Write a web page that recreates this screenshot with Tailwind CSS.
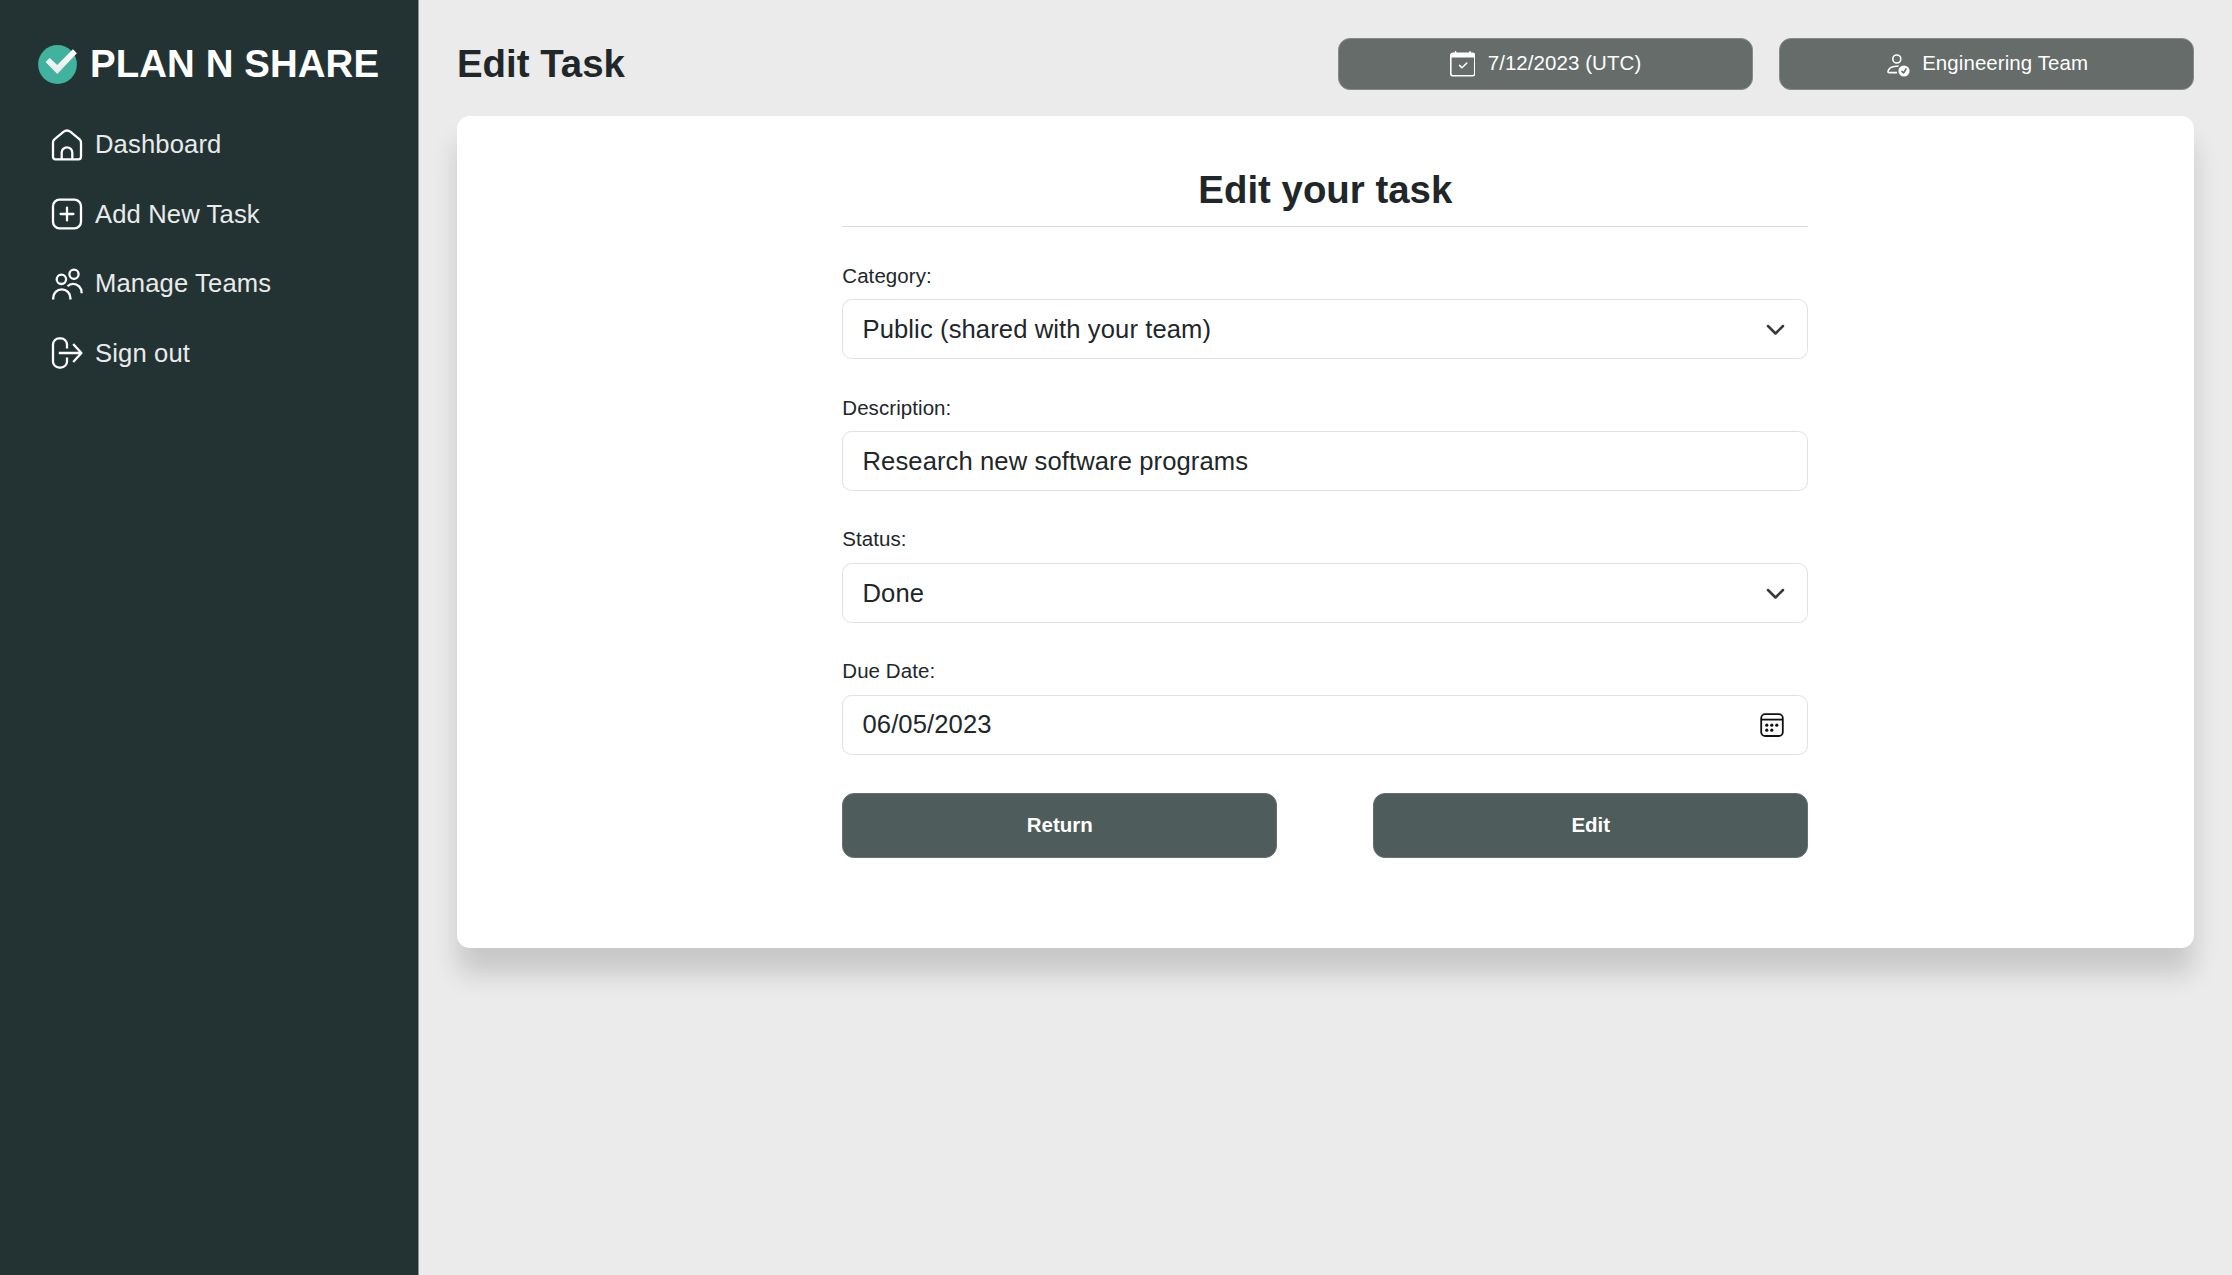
<!DOCTYPE html>
<html lang="en">
<head>
<meta charset="utf-8">
<title>Plan N Share - Edit Task</title>
<script src="https://cdn.jsdelivr.net/npm/@tailwindcss/browser@4"></script>
</head>
<body class="flex h-[1275px] w-[2232px] overflow-hidden bg-[#ebebeb] font-['Liberation_Sans',Arial,sans-serif] text-[#212729]">
  <aside class="flex w-[419px] shrink-0 flex-col border-r border-[#8b9393] bg-[#233333] pl-[38px] pt-[38.4px]">
    <div class="flex h-[51px] items-center gap-[13px] text-white">
      <svg class="mt-px size-[39px] shrink-0" viewBox="0 0 39 39">
        <defs><linearGradient id="tick" x1="0" y1="0" x2="0" y2="1"><stop offset="0" stop-color="#fff"/><stop offset="1" stop-color="#e4eae9"/></linearGradient></defs>
        <circle cx="19.5" cy="19.5" r="19.4" fill="#40b29d"/>
        <path d="M7.6 17l4.2-4.1 7.4 7.2L34.9 4.2l4 4L19.3 29z" fill="url(#tick)"/>
      </svg>
      <span class="whitespace-nowrap text-[38.4px] leading-[51px] font-bold tracking-[0.1px]">PLAN N SHARE</span>
    </div>
    <nav class="mt-[36px] flex flex-col gap-[31px] pl-[13px] text-[25.6px] leading-[38.4px] tracking-[0.14px] text-[#e9ebeb]">
      <a class="flex h-[38.4px] items-center gap-[12px] pt-[3px]">
        <svg class="relative -top-px size-8" viewBox="0 0 32 32" fill="none" stroke="#fff" stroke-width="2.3"><path d="M2 13.5Q2 11.6 3.4 10.3L12.4 2.9Q16 .2 19.6 2.9L28.6 10.3Q30 11.6 30 13.5V27.8Q30 30.3 27.5 30.3H4.5Q2 30.3 2 27.8zM10.7 30V23.6a5.3 5.3 0 0 1 10.6 0V30"/></svg>
        <span class="relative -top-[1.5px]">Dashboard</span>
      </a>
      <a class="flex h-[38.4px] items-center gap-[12px] pt-[3px]">
        <svg class="relative -top-px size-8" viewBox="0 0 32 32" fill="none" stroke="#fff" stroke-width="2.3"><rect x="2" y="1.7" width="28" height="28.6" rx="6.5"/><path d="M16 9.6v12.8M9.6 16h12.8" stroke-linecap="round"/></svg>
        <span class="relative -top-[1.5px]">Add New Task</span>
      </a>
      <a class="flex h-[38.4px] items-center gap-[12px] pt-[3px]">
        <svg class="relative -top-px size-8" viewBox="0 0 32 32" fill="none" stroke="#fff" stroke-width="2.3"><circle cx="10.4" cy="11.3" r="4.7"/><circle cx="23" cy="6.3" r="4.6"/><path d="M2.2 31.5V30a8.6 8.6 0 0 1 17.2 0v1.5M16.6 18.2Q18.8 15.9 22 15.9a8.6 8.6 0 0 1 8.6 8.6v.7"/></svg>
        <span class="relative -top-[1.5px]">Manage Teams</span>
      </a>
      <a class="flex h-[38.4px] items-center gap-[12px] pt-[3px]">
        <svg class="relative -top-px size-8" viewBox="0 0 32 32" fill="none" stroke="#fff" stroke-width="2.3"><path d="M16 11.6V7.6A6.2 6.2 0 0 0 9.8 1.4H8.2A6.2 6.2 0 0 0 2 7.6v16.8a6.2 6.2 0 0 0 6.2 6.2h1.6a6.2 6.2 0 0 0 6.2-6.2v-4M7.8 16H30.4M22.2 7l8.2 9-8.2 9" stroke-linejoin="round"/></svg>
        <span class="relative -top-[1.5px]">Sign out</span>
      </a>
    </nav>
  </aside>

  <main class="flex flex-1 flex-col pl-[38px] pr-[38.4px] pt-[38px]">
    <header class="flex h-[52.4px] items-center justify-between">
      <h1 class="text-[38.4px] leading-[52px] font-bold">Edit Task</h1>
      <div class="flex gap-[25.6px] text-[20.48px] text-white">
        <div class="flex h-[52.4px] w-[415px] items-center justify-center gap-[12.4px] rounded-[12px] border border-[#848b88] bg-[#656c69]">
          <svg class="size-[25.6px]" viewBox="0 0 16 16" fill="currentColor"><path d="M10.854 7.146a.5.5 0 0 1 0 .708l-3 3a.5.5 0 0 1-.708 0l-1.5-1.5a.5.5 0 1 1 .708-.708L7.5 9.793l2.646-2.647a.5.5 0 0 1 .708 0z"/><path d="M3.5 0a.5.5 0 0 1 .5.5V1h8V.5a.5.5 0 0 1 1 0V1h1a2 2 0 0 1 2 2v11a2 2 0 0 1-2 2H2a2 2 0 0 1-2-2V3a2 2 0 0 1 2-2h1V.5a.5.5 0 0 1 .5-.5zM1 4v10a1 1 0 0 0 1 1h12a1 1 0 0 0 1-1V4H1z"/></svg>
          <span class="-mt-px tracking-[0.08px]">7/12/2023 (UTC)</span>
        </div>
        <div class="flex h-[52.4px] w-[415px] items-center justify-center gap-[12.4px] rounded-[12px] border border-[#848b88] bg-[#656c69]">
          <svg class="size-[25.6px]" viewBox="0 0 16 16" fill="currentColor"><path d="M12.5 16a3.5 3.5 0 1 0 0-7 3.5 3.5 0 0 0 0 7Zm1.679-4.493-1.335 2.226a.75.75 0 0 1-1.174.144l-.774-.773a.5.5 0 0 1 .708-.708l.547.548 1.17-1.951a.5.5 0 1 1 .858.514ZM11 5a3 3 0 1 1-6 0 3 3 0 0 1 6 0ZM8 7a2 2 0 1 0 0-4 2 2 0 0 0 0 4Z"/><path d="M8.256 14a4.474 4.474 0 0 1-.229-1.004H3c.001-.246.154-.986.832-1.664C4.484 10.68 5.711 10 8 10c.26 0 .507.009.74.025.226-.341.496-.65.804-.918C9.077 9.038 8.564 9 8 9c-5 0-6 3-6 4s1 1 1 1h5.256Z"/></svg>
          <span class="-mt-px tracking-[0.08px]">Engineering Team</span>
        </div>
      </div>
    </header>

    <section class="mt-[25.6px] flex h-[832px] justify-center rounded-[12.8px] bg-white shadow-[0_25.6px_25.6px_rgba(0,0,0,0.15)]">
      <form class="flex w-[966px] flex-col pt-[51px]">
        <h2 class="h-[60px] border-b border-[#d5dada] text-center text-[38.4px] leading-[46px] font-bold">Edit your task</h2>

        <div class="mt-[34px] flex h-[98.4px] flex-col justify-between">
          <label class="text-[20.48px] leading-[30.7px] tracking-[0.08px]">Category:</label>
          <div class="flex h-[60px] items-center justify-between rounded-[9.6px] border border-[#dee2e4] pl-[19.2px] pr-[22px] text-[25.6px] tracking-[0.1px]">
            <span>Public (shared with your team)</span>
            <svg class="mt-0.5 h-3 w-5" viewBox="0 0 20 12" fill="none" stroke="#343a40" stroke-width="2.5" stroke-linecap="round" stroke-linejoin="round"><path d="M3 2l7.5 7.5L18 2"/></svg>
          </div>
        </div>
        <div class="mt-[33.4px] flex h-[98.4px] flex-col justify-between">
          <label class="text-[20.48px] leading-[30.7px] tracking-[0.08px]">Description:</label>
          <div class="flex h-[60px] items-center rounded-[9.6px] border border-[#dee2e4] pl-[19.2px] text-[25.6px] tracking-[0.1px]">Research new software programs</div>
        </div>
        <div class="mt-[33.4px] flex h-[98.4px] flex-col justify-between">
          <label class="-mt-px text-[20.48px] leading-[30.7px] tracking-[0.08px]">Status:</label>
          <div class="flex h-[60px] items-center justify-between rounded-[9.6px] border border-[#dee2e4] pl-[19.2px] pr-[22px] text-[25.6px] tracking-[0.1px]">
            <span>Done</span>
            <svg class="mt-0.5 h-3 w-5" viewBox="0 0 20 12" fill="none" stroke="#343a40" stroke-width="2.5" stroke-linecap="round" stroke-linejoin="round"><path d="M3 2l7.5 7.5L18 2"/></svg>
          </div>
        </div>
        <div class="mt-[33.4px] flex h-[98.4px] flex-col justify-between">
          <label class="text-[20.48px] leading-[30.7px] tracking-[0.08px]">Due Date:</label>
          <div class="flex h-[60px] items-center justify-between rounded-[9.6px] border border-[#dee2e4] pl-[19.2px] pr-[23px] text-[25.6px] tracking-[0.1px]">
            <span class="-mt-px">06/05/2023</span>
            <svg class="size-6" viewBox="0 0 24 24" fill="none" stroke="#111" stroke-width="1.8"><rect x="1.2" y="1.2" width="21.6" height="21.8" rx="4"/><path d="M1.2 6.6h21.6"/><g fill="#111" stroke="none"><circle cx="6.8" cy="12.2" r="1.6"/><circle cx="11.8" cy="12.2" r="1.6"/><circle cx="16.8" cy="12.2" r="1.6"/><circle cx="6.8" cy="17.2" r="1.6"/><circle cx="11.8" cy="17.2" r="1.6"/></g></svg>
          </div>
        </div>

        <div class="mt-[38.2px] flex justify-between text-[20.48px] font-bold text-white">
          <button type="button" class="h-[64.6px] w-[435px] rounded-[12px] border border-[#657071] bg-[#4f5c5c]">Return</button>
          <button type="button" class="h-[64.6px] w-[435px] rounded-[12px] border border-[#657071] bg-[#4f5c5c]">Edit</button>
        </div>
      </form>
    </section>
  </main>
</body>
</html>
